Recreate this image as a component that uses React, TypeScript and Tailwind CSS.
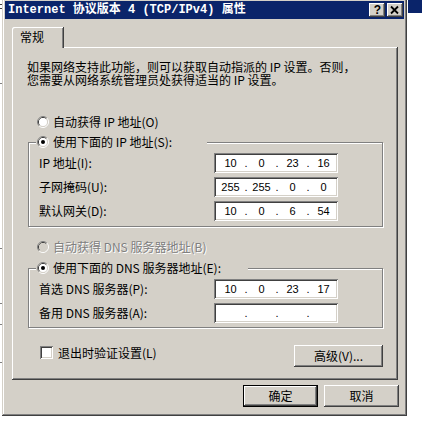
import { Fragment } from "react";

const cjk = "font-['Noto_Sans_CJK_SC',sans-serif]";

function Radio({ checked, disabled }: { checked?: boolean; disabled?: boolean }) {
  return (
    <svg width="12" height="12" viewBox="0 0 12 12" className="shrink-0">
      <path d="M2.11 9.89A5.5 5.5 0 0 1 9.89 2.11" stroke="#808080" fill="none" />
      <path d="M9.89 2.11A5.5 5.5 0 0 1 2.11 9.89" stroke="#ffffff" fill="none" />
      <path d="M2.82 9.18A4.5 4.5 0 0 1 9.18 2.82" stroke="#404040" fill="none" />
      <path d="M9.18 2.82A4.5 4.5 0 0 1 2.82 9.18" stroke="#d4d0c8" fill="none" />
      <circle cx="6" cy="6" r="4" fill={disabled ? "#d4d0c8" : "#ffffff"} />
      {checked && <circle cx="6" cy="6" r="2" fill="#000000" />}
    </svg>
  );
}

function IpBox({ parts }: { parts?: string[] }) {
  const p = parts ?? ["", "", "", ""];
  return (
    <div className="w-[124px] h-[20px] bg-white shadow-[inset_1px_1px_#808080,inset_-1px_-1px_#ffffff,inset_2px_2px_#404040,inset_-2px_-2px_#d4d0c8] flex items-center pl-[4px] text-[11px] leading-none font-['Liberation_Sans',sans-serif]">
      {p.map((v, i) => (
        <Fragment key={i}>
          <span className="w-[25px] text-center">{v}</span>
          {i < 3 && <span className="w-[6px] text-center">.</span>}
        </Fragment>
      ))}
    </div>
  );
}

function Row({ label, parts }: { label: string; parts?: string[] }) {
  return (
    <div className="flex items-center h-[20px] ml-[10px]">
      <span className="w-[175px]">{label}</span>
      <IpBox parts={parts} />
    </div>
  );
}

const raised =
  "shadow-[inset_-1px_-1px_#404040,inset_1px_1px_#ffffff,inset_-2px_-2px_#808080] bg-[#d4d0c8]";

export default function App() {
  return (
    <div className={`w-[422px] h-[429px] bg-white flex overflow-hidden text-[12px] text-black ${cjk}`}>
      {/* background window bits */}
      <div className="w-[2px] flex flex-col shrink-0">
        <div className="h-[4px]" />
        <div className="h-[1px] bg-[#404040]" />
        <div className="h-[3px]" />
        <div className="h-[1px] bg-[#404040]" />
        <div className="h-[74px]" />
        <div className="h-[1px] bg-[#808080]" />
        <div className="h-[164px]" />
        <div className="h-[1px] bg-[#808080]" />
        <div className="h-[54px]" />
        <div className="h-[1px] bg-[#808080]" />
        <div className="h-[20px]" />
        <div className="h-[1px] bg-[#808080]" />
        <div className="h-[37px]" />
        <div className="h-[1px] bg-[#808080]" />
      </div>

      {/* dialog */}
      <div className="w-[405px] h-[418px] -mt-[2px] shrink-0 p-[3px] bg-[#d4d0c8] flex flex-col shadow-[inset_-1px_-1px_#404040,inset_1px_1px_#d4d0c8,inset_-2px_-2px_#808080,inset_2px_2px_#ffffff]">
        {/* title bar */}
        <div className="h-[18px] bg-[#0a246a] flex items-center pl-[3px] pr-[1px]">
          <span className="text-white font-bold text-[12px] leading-none font-['Liberation_Mono','Noto_Sans_CJK_SC',monospace] whitespace-nowrap">
            Internet 协议版本 4 (TCP/IPv4) 属性
          </span>
          <div className="ml-auto flex gap-[2px]">
            <div className={`w-[16px] h-[14px] ${raised} flex items-center justify-center pl-[1px] font-bold text-[12px] leading-none font-['Liberation_Sans',sans-serif]`}>
              ?
            </div>
            <div className={`w-[16px] h-[14px] ${raised} flex items-center justify-center`}>
              <svg width="16" height="14" viewBox="0 0 16 14">
                <path d="M4 3.5 L11 10.5 M11 3.5 L4 10.5" stroke="#000" strokeWidth="1.8" />
              </svg>
            </div>
          </div>
        </div>

        {/* client */}
        <div className="flex flex-col pl-[7px] pr-[5px] pt-[8px]">
          <div className="relative z-10 w-[52px] h-[21px] bg-[#d4d0c8] rounded-tl-[2px] shadow-[inset_-1px_0_#404040,inset_1px_1px_#ffffff,inset_-2px_0_#808080] flex items-center pl-[8px] pb-[1px]">
            常规
          </div>
          <div className="-mt-[1px] w-[386px] h-[333px] bg-[#d4d0c8] shadow-[inset_-1px_-1px_#404040,inset_1px_1px_#ffffff,inset_-2px_-2px_#808080] flex flex-col pt-[13px]">
            <p className="pl-[15px] leading-[13px] whitespace-nowrap">
              如果网络支持此功能，则可以获取自动指派的 IP 设置。否则，
              <br />
              您需要从网络系统管理员处获得适当的 IP 设置。
            </p>

            <div className="mt-[30px] ml-[25px] h-[12px] flex items-center gap-[4px] leading-none">
              <Radio />
              <span>自动获得 IP 地址(O)</span>
            </div>

            <div className="mt-[14px] ml-[16px] w-[355px] h-[85px] border border-[#808080] shadow-[inset_1px_1px_#ffffff,1px_1px_#ffffff] flex flex-col">
              <div className="-mt-[7px] ml-[7px] w-[171px] h-[12px] pl-[1px] bg-[#d4d0c8] flex items-center gap-[4px] leading-none">
                <Radio checked />
                <span>使用下面的 IP 地址(S):</span>
              </div>
              <div className="mt-[5px] flex flex-col gap-[4px]">
                <Row label="IP 地址(I):" parts={["10", "0", "23", "16"]} />
                <Row label="子网掩码(U):" parts={["255", "255", "0", "0"]} />
                <Row label="默认网关(D):" parts={["10", "0", "6", "54"]} />
              </div>
            </div>

            <div className="mt-[14px] ml-[25px] h-[12px] flex items-center gap-[4px] leading-none">
              <Radio disabled />
              <span className="text-[#808080] [text-shadow:1px_1px_0_#ffffff]">自动获得 DNS 服务器地址(B)</span>
            </div>

            <div className="mt-[15px] ml-[16px] w-[355px] h-[60px] border border-[#808080] shadow-[inset_1px_1px_#ffffff,1px_1px_#ffffff] flex flex-col">
              <div className="-mt-[7px] ml-[7px] w-[212px] h-[12px] pl-[1px] bg-[#d4d0c8] flex items-center gap-[4px] leading-none">
                <Radio checked />
                <span>使用下面的 DNS 服务器地址(E):</span>
              </div>
              <div className="mt-[5px] flex flex-col gap-[4px]">
                <Row label="首选 DNS 服务器(P):" parts={["10", "0", "23", "17"]} />
                <Row label="备用 DNS 服务器(A):" />
              </div>
            </div>

            <div className="mt-[17px] ml-[28px] w-[343px] flex items-start">
              <div className="mt-[1px] h-[13px] flex items-center gap-[5px] leading-none">
                <div className="w-[13px] h-[13px] bg-white shadow-[inset_1px_1px_#808080,inset_-1px_-1px_#ffffff,inset_2px_2px_#404040,inset_-2px_-2px_#d4d0c8]" />
                <span>退出时验证设置(L)</span>
              </div>
              <div className={`ml-auto w-[89px] h-[22px] ${raised} flex items-center justify-center leading-none`}>
                高级(V)...
              </div>
            </div>
          </div>

          <div className="mt-[5px] flex justify-end gap-[6px]">
            <div className="w-[75px] h-[22px] border border-black bg-[#d4d0c8] shadow-[inset_-1px_-1px_#404040,inset_1px_1px_#ffffff,inset_-2px_-2px_#808080] flex items-center justify-center leading-none">
              确定
            </div>
            <div className={`w-[75px] h-[22px] ${raised} flex items-center justify-center leading-none`}>
              取消
            </div>
          </div>
        </div>
      </div>

      <div className="flex-1 flex flex-col">
        <div className="h-[13px] ml-[1px] bg-[#0a246a]" />
      </div>
    </div>
  );
}
